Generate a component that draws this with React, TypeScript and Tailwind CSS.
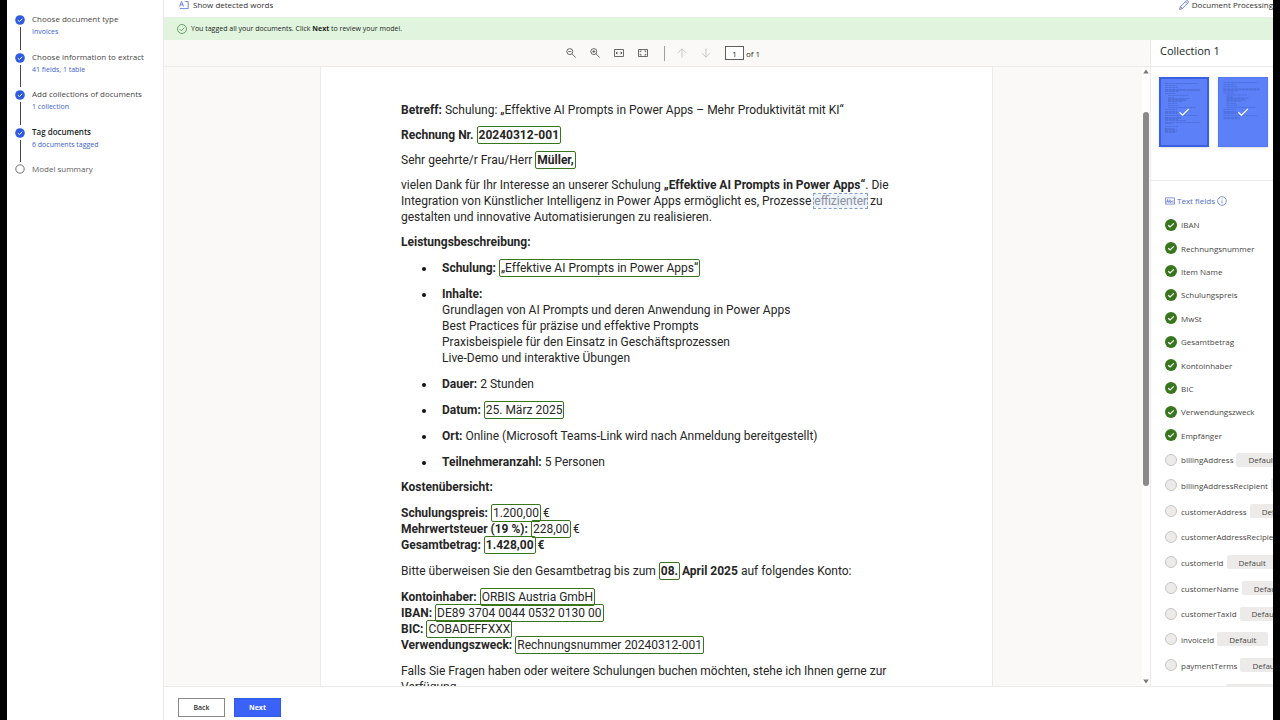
import type { ReactNode } from "react";

const STEPS = [
  { title: "Choose document type", detail: "Invoices" },
  { title: "Choose information to extract", detail: "41 fields, 1 table" },
  { title: "Add collections of documents", detail: "1 collection" },
  { title: "Tag documents", detail: "6 documents tagged", current: true },
];

const TAGGED_FIELDS = [
  "IBAN",
  "Rechnungsnummer",
  "Item Name",
  "Schulungspreis",
  "MwSt",
  "Gesamtbetrag",
  "Kontoinhaber",
  "BIC",
  "Verwendungszweck",
  "Empfänger",
];

const DEFAULT_FIELDS = [
  "billingAddress",
  "billingAddressRecipient",
  "customerAddress",
  "customerAddressRecipient",
  "customerId",
  "customerName",
  "customerTaxId",
  "invoiceId",
  "paymentTerms",
];

function StepCheck() {
  return (
    <svg viewBox="0 0 10 10" className="size-[10px] shrink-0" aria-hidden="true">
      <circle cx="5" cy="5" r="4.8" fill="#2f5be0" />
      <path d="M2.8 5.1 4.4 6.6 7.3 3.7" fill="none" stroke="#fff" strokeWidth="0.9" />
    </svg>
  );
}

function FieldCheck() {
  return (
    <svg viewBox="0 0 12 12" className="size-3 shrink-0" aria-hidden="true">
      <circle cx="6" cy="6" r="6" fill="#38761d" />
      <path d="M3.2 6.2 5.1 8 8.8 4.4" fill="none" stroke="#fff" strokeWidth="1.2" />
    </svg>
  );
}

function Stepper() {
  return (
    <nav aria-label="Progress" className="w-[157px] shrink-0 border-r border-[#edebe9] bg-white pt-[13px] pl-2">
      <ol>
        <li>
          <ol className="grid h-[150px] auto-rows-fr">
            {STEPS.map((step) => (
              <li key={step.title} className="flex gap-[7px]">
                <div className="flex flex-col items-center pt-[2px]">
                  <StepCheck />
                  <span className="mt-[2px] mb-px w-px flex-1 bg-[#484644]" />
                </div>
                <div>
                  <p
                    className={
                      step.current
                        ? "text-[8px] leading-[11px] font-semibold whitespace-nowrap text-[#201f1e]"
                        : "text-[8px] leading-[11px] whitespace-nowrap text-[#484644]"
                    }
                  >
                    {step.title}
                  </p>
                  <a href="#step" className="mt-[3px] block text-[7px] leading-[10px] whitespace-nowrap text-[#3b62cc]">
                    {step.detail}
                  </a>
                </div>
              </li>
            ))}
          </ol>
        </li>
        <li className="flex gap-[7px]">
          <svg viewBox="0 0 10 10" className="mt-px size-[10px] shrink-0" aria-hidden="true">
            <circle cx="5" cy="5" r="4.2" fill="none" stroke="#605e5c" strokeWidth="0.9" />
          </svg>
          <p className="text-[8px] leading-[11px] text-[#605e5c]">Model summary</p>
        </li>
      </ol>
    </nav>
  );
}

function CommandBar() {
  return (
    <div className="flex h-[17px] shrink-0 items-start justify-between bg-white pl-[15px] text-[8px] leading-[10px] text-[#323130]">
      <button type="button" className="flex items-center gap-1 whitespace-nowrap">
        <svg viewBox="0 0 10 10" className="size-[10px]" fill="none" stroke="#4f6bcb" strokeWidth="0.8" aria-hidden="true">
          <path d="M0.6 6.6 2.6 1.4 4.6 6.6M1.3 4.8H3.9M5.8 1.6H9.2V8.6H1.2V7.8" />
        </svg>
        Show detected words
      </button>
      <button type="button" className="flex items-center gap-[3px] whitespace-nowrap">
        <svg viewBox="0 0 10 10" className="size-[10px]" fill="none" stroke="#4f6bcb" strokeWidth="0.8" aria-hidden="true">
          <path d="M0.6 9.4 1.3 6.8 7.3 0.9Q8.2 0.2 9 1T9.1 2.7L3.2 8.7ZM6.4 1.8 8.2 3.6M1.3 6.8Q2.9 7 3.2 8.7" />
        </svg>
        Document Processing
      </button>
    </div>
  );
}

function Banner() {
  return (
    <div role="status" className="flex h-[23px] shrink-0 items-center gap-1 bg-[#e1f4dd] pl-[13px] text-[7px] leading-[10px] text-[#201f1e]">
      <svg viewBox="0 0 10 10" className="size-[10px]" fill="none" stroke="#3f7a3a" strokeWidth="0.7" aria-hidden="true">
        <circle cx="5" cy="5" r="4.5" />
        <path d="M2.8 5.2 4.3 6.7 7.4 3.6" />
      </svg>
      <p>
        You tagged all your documents. Click <b className="font-bold">Next</b> to review your model.
      </p>
    </div>
  );
}

function ToolButton({ label, faded, children }: { label: string; faded?: boolean; children: ReactNode }) {
  return (
    <button type="button" aria-label={label} className={faded ? "text-[#bebbb8]" : "text-[#484644]"}>
      <svg viewBox="0 0 10 10" className="size-[10px]" fill="none" stroke="currentColor" strokeWidth="0.8" aria-hidden="true">
        {children}
      </svg>
    </button>
  );
}

function Toolbar() {
  return (
    <div className="flex h-[27px] shrink-0 items-center justify-center border-b border-[#edebe9] bg-[#faf9f8] pl-3">
      <div className="flex gap-[14px]">
        <ToolButton label="Zoom out">
          <circle cx="3.8" cy="3.6" r="3" />
          <path d="M6 5.8 9.8 9.6M2.3 3.6H5.3" />
        </ToolButton>
        <ToolButton label="Zoom in">
          <circle cx="3.8" cy="3.6" r="3" />
          <path d="M6 5.8 9.8 9.6M2.3 3.6H5.3M3.8 2.1V5.1" />
        </ToolButton>
        <ToolButton label="Fit to width">
          <path d="M0.5 1.5H9.5V8.5H0.5ZM2 5H4M6 5H8M3.2 3.8 2 5 3.2 6.2M6.8 3.8 8 5 6.8 6.2" />
        </ToolButton>
        <ToolButton label="Fit to page">
          <path d="M0.5 1.5H9.5V8.5H0.5ZM2.2 4.2V3H3.6M6.4 3H7.8V4.2M7.8 5.8V7H6.4M3.6 7H2.2V5.8" />
        </ToolButton>
      </div>
      <span className="mr-3 ml-4 h-[15px] w-px bg-[#a19f9d]" />
      <div className="flex gap-[14px]">
        <ToolButton label="Previous page" faded>
          <path d="M5 9.6V0.8M0.8 5 5 0.8 9.2 5" />
        </ToolButton>
        <ToolButton label="Next page" faded>
          <path d="M5 0.4V9.2M0.8 5 5 9.2 9.2 5" />
        </ToolButton>
      </div>
      <label className="ml-[14px] flex items-center gap-[2px] text-[8px] leading-[11px] text-[#323130]">
        <input
          type="text"
          aria-label="Page number"
          defaultValue="1"
          className="h-[14px] w-[19px] border border-[#605e5c] bg-white text-center text-[8px] text-[#201f1e]"
        />
        of 1
      </label>
    </div>
  );
}

function Tag({ children }: { children: ReactNode }) {
  return <span className="ml-px rounded-[1px] px-px py-px outline outline-[#38761d]">{children}</span>;
}

function Item({ children }: { children: ReactNode }) {
  return (
    <li className="flex">
      <span className="mt-[7px] mr-4 ml-[21px] size-1 shrink-0 rounded-full bg-[#111]" />
      <div>{children}</div>
    </li>
  );
}

function Invoice() {
  return (
    <article className="h-full w-[673px] overflow-hidden border-x border-[#edebe9] bg-white pt-[35px] pl-20 font-['Roboto',sans-serif] text-[12px] leading-4 whitespace-nowrap text-[#262626]">
      <div className="flex flex-col gap-[9px]">
        <p>
          <b>Betreff:</b> Schulung: „Effektive AI Prompts in Power Apps – Mehr Produktivität mit KI“
        </p>
        <p>
          <b>
            Rechnung Nr. <Tag>20240312-001</Tag>
          </b>
        </p>
        <p>
          Sehr geehrte/r Frau/Herr <b><Tag>Müller,</Tag></b>
        </p>
        <p>
          vielen Dank für Ihr Interesse an unserer Schulung <b>„Effektive AI Prompts in Power Apps“</b>. Die
          <br />
          Integration von Künstlicher Intelligenz in Power Apps ermöglicht es, Prozesse{" "}
          <span className="bg-[#eff4fc] text-[#8a8f99] outline-1 outline-[#7f9fd0] outline-dashed">effizienter</span> zu
          <br />
          gestalten und innovative Automatisierungen zu realisieren.
        </p>
        <h2 className="font-bold">Leistungsbeschreibung:</h2>
      </div>
      <div className="mt-[10px] flex flex-col gap-[9px]">
        <ul className="flex flex-col gap-[10px]">
          <Item>
            <b>Schulung:</b> <Tag>„Effektive AI Prompts in Power Apps“</Tag>
          </Item>
          <Item>
            <b>Inhalte:</b>
            <br />
            Grundlagen von AI Prompts und deren Anwendung in Power Apps
            <br />
            Best Practices für präzise und effektive Prompts
            <br />
            Praxisbeispiele für den Einsatz in Geschäftsprozessen
            <br />
            Live-Demo und interaktive Übungen
          </Item>
          <Item>
            <b>Dauer:</b> 2 Stunden
          </Item>
          <Item>
            <b>Datum:</b> <Tag>25. März 2025</Tag>
          </Item>
          <Item>
            <b>Ort:</b> Online (Microsoft Teams-Link wird nach Anmeldung bereitgestellt)
          </Item>
          <Item>
            <b>Teilnehmeranzahl:</b> 5 Personen
          </Item>
        </ul>
        <div className="flex flex-col gap-[10px]">
          <h2 className="font-bold">Kostenübersicht:</h2>
          <p>
            <b>Schulungspreis:</b> <Tag>1.200,00</Tag> €
            <br />
            <b>Mehrwertsteuer (19 %):</b> <Tag>228,00</Tag> €
            <br />
            <b>
              Gesamtbetrag: <Tag>1.428,00</Tag> €
            </b>
          </p>
          <p>
            Bitte überweisen Sie den Gesamtbetrag bis zum{" "}
            <b>
              <Tag>08.</Tag> April 2025
            </b>{" "}
            auf folgendes Konto:
          </p>
          <p>
            <b>Kontoinhaber:</b> <Tag>ORBIS Austria GmbH</Tag>
            <br />
            <b>IBAN:</b> <Tag>DE89 3704 0044 0532 0130 00</Tag>
            <br />
            <b>BIC:</b> <Tag>COBADEFFXXX</Tag>
            <br />
            <b>Verwendungszweck:</b> <Tag>Rechnungsnummer 20240312-001</Tag>
          </p>
          <p>
            Falls Sie Fragen haben oder weitere Schulungen buchen möchten, stehe ich Ihnen gerne zur
            <br />
            Verfügung.
          </p>
        </div>
      </div>
    </article>
  );
}

function ScrollRail() {
  return (
    <div aria-hidden="true" className="flex w-2 shrink-0 flex-col items-center bg-[#fdfdfd] py-[2px]">
      <svg viewBox="0 0 6 5" className="h-[5px] w-[6px]" fill="#7a7a7a">
        <path d="M3 0.4 5.8 4.6H0.2Z" />
      </svg>
      <div className="flex w-[6px] flex-1 flex-col pt-[38px]">
        <span className="h-[66%] rounded-full bg-[#8a8a8a]" />
      </div>
      <svg viewBox="0 0 6 5" className="h-[5px] w-[6px]" fill="#7a7a7a">
        <path d="M3 4.6 5.8 0.4H0.2Z" />
      </svg>
    </div>
  );
}

const TEXT_ROWS = [
  [0, 0, 33], [0, 2, 12], [0, 4, 13], [0, 6, 36], [0, 7, 35], [0, 8, 14], [0, 10, 11], [3, 12, 20], [3, 14, 7],
  [3, 15, 22], [3, 16, 18], [3, 17, 19], [3, 18, 15], [3, 20, 9], [3, 22, 11], [3, 24, 28], [0, 26, 12], [0, 28, 12],
  [0, 29, 15], [0, 30, 12], [0, 32, 33], [0, 34, 16], [0, 35, 16], [0, 36, 13], [0, 37, 21], [0, 39, 36], [0, 40, 8],
  [0, 43, 13], [0, 45, 9], [0, 46, 12], [0, 47, 10], [0, 48, 12], [0, 49, 11],
];

function Thumbnail({ label, selected, rows }: { label: string; selected?: boolean; rows: number }) {
  return (
    <button
      type="button"
      aria-label={label}
      className={
        selected
          ? "h-[70px] w-[50px] shrink-0 border-2 border-[#3a5fe0] bg-[#5b80f8] shadow"
          : "h-[70px] w-[50px] shrink-0 border border-[#5478f0] bg-[#5b80f8] shadow"
      }
    >
      <svg viewBox="2 2 46 66" className="size-full" fill="none" aria-hidden="true">
        {TEXT_ROWS.slice(0, rows).map(([x, y, w]) => (
          <path key={y} d={`M${x + 6} ${y + 6.5}h${w}`} stroke="#4666cc" strokeWidth="0.6" strokeDasharray="3 0.6" />
        ))}
        <path d="M20.5 35.2 23.5 38.2 29.7 32" stroke="#fff" strokeWidth="1.2" />
      </svg>
    </button>
  );
}

function FieldsPanel() {
  return (
    <aside className="flex w-[123px] shrink-0 flex-col overflow-hidden border-l border-[#edebe9] bg-white">
      <h1 className="h-[27px] shrink-0 border-b border-[#edebe9] pt-[3px] pl-[9px] text-[11px] leading-4 font-medium text-[#201f1e]">
        Collection 1
      </h1>
      <div className="flex h-[114px] shrink-0 gap-[9px] border-b border-[#edebe9] pt-[10px] pl-2">
        <Thumbnail label="Document 1" selected rows={33} />
        <Thumbnail label="Document 2" rows={23} />
      </div>
      <div className="flex flex-col pt-[14px] pl-[14px] text-[8px] leading-[11px] whitespace-nowrap text-[#484644]">
        <h2 className="flex items-center gap-[2px] text-[#4f6bcb]">
          <svg viewBox="0 0 10 10" className="size-[10px]" fill="none" stroke="currentColor" strokeWidth="0.7" aria-hidden="true">
            <path d="M0.4 1.9H9.6V8.1H0.4ZM1.5 6.6 2.6 3.6 3.7 6.6M1.9 5.7H3.3M4.8 3.4V6.5M8.6 5Q7.4 4.2 7.3 5.5T8.6 6.3" />
            <circle cx="5.6" cy="5.6" r="0.8" />
          </svg>
          Text fields
          <button type="button" aria-label="About text fields">
            <svg viewBox="0 0 10 10" className="size-[10px]" fill="none" stroke="currentColor" strokeWidth="0.7" aria-hidden="true">
              <circle cx="5" cy="5" r="4.3" />
              <path d="M5 4.4V7.4M5 2.6V3.4" />
            </svg>
          </button>
        </h2>
        <ul className="mt-[7px] grid h-[234px] shrink-0 auto-rows-fr items-center">
          {TAGGED_FIELDS.map((name) => (
            <li key={name} className="flex items-center gap-1">
              <FieldCheck />
              {name}
            </li>
          ))}
        </ul>
        <ul className="grid h-[231px] shrink-0 auto-rows-fr items-center">
          {DEFAULT_FIELDS.map((name) => (
            <li key={name} className="flex items-center">
              <span className="mr-1 size-3 shrink-0 rounded-full border border-[#c8c6c4] bg-[#edebe9]" />
              {name}
              <button type="button" className="ml-[3px] h-[14px] rounded-[2px] bg-[#edebe9] px-3">
                Default
              </button>
            </li>
          ))}
        </ul>
        <span className="mt-[6px] ml-[61px] h-[14px] shrink-0 rounded-[2px] bg-[#edebe9]" />
      </div>
    </aside>
  );
}

export default function App() {
  return (
    <div className="flex h-screen overflow-hidden bg-black px-[7px] font-['Open_Sans',sans-serif]">
      <Stepper />
      <main className="flex min-w-0 flex-1 flex-col bg-white">
        <CommandBar />
        <Banner />
        <div className="flex min-h-0 flex-1">
          <section className="flex min-w-0 flex-1 flex-col">
            <Toolbar />
            <div className="flex min-h-0 flex-1">
              <div className="flex min-w-0 flex-1 justify-center bg-[#faf9f8] pl-[7px]">
                <Invoice />
              </div>
              <ScrollRail />
            </div>
          </section>
          <FieldsPanel />
        </div>
        <footer className="flex h-[34px] shrink-0 items-start gap-[9px] border-t border-[#edebe9] pt-[11px] pl-[14px] text-[7px] leading-[10px]">
          <button type="button" className="h-[19px] w-[47px] border border-[#8a8886] bg-white font-semibold text-[#323130]">
            Back
          </button>
          <button type="button" className="h-[19px] w-[47px] border border-[#2f5be0] bg-[#3b62f6] font-bold text-white">
            Next
          </button>
        </footer>
      </main>
    </div>
  );
}
